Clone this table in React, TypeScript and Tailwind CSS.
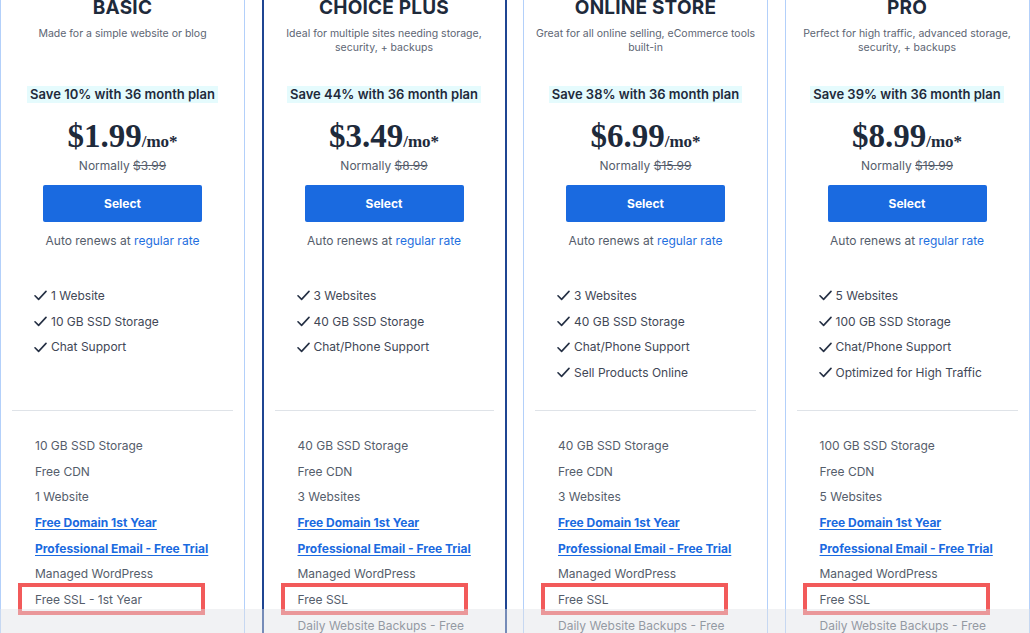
import React from "react";

type Plan = {
  name: string;
  blurb: string[];
  save: string;
  price: string;
  normally: string;
  checks: string[];
  features: { text: string; link?: boolean; boxed?: boolean }[];
  featured?: boolean;
};

const PLANS: Plan[] = [
  {
    name: "BASIC",
    blurb: ["Made for a simple website or blog"],
    save: "Save 10% with 36 month plan",
    price: "$1.99",
    normally: "$3.99",
    checks: ["1 Website", "10 GB SSD Storage", "Chat Support"],
    features: [
      { text: "10 GB SSD Storage" },
      { text: "Free CDN" },
      { text: "1 Website" },
      { text: "Free Domain 1st Year", link: true },
      { text: "Professional Email - Free Trial", link: true },
      { text: "Managed WordPress" },
      { text: "Free SSL - 1st Year", boxed: true },
    ],
  },
  {
    name: "CHOICE PLUS",
    blurb: ["Ideal for multiple sites needing storage,", "security, + backups"],
    save: "Save 44% with 36 month plan",
    price: "$3.49",
    normally: "$8.99",
    checks: ["3 Websites", "40 GB SSD Storage", "Chat/Phone Support"],
    featured: true,
    features: [
      { text: "40 GB SSD Storage" },
      { text: "Free CDN" },
      { text: "3 Websites" },
      { text: "Free Domain 1st Year", link: true },
      { text: "Professional Email - Free Trial", link: true },
      { text: "Managed WordPress" },
      { text: "Free SSL", boxed: true },
      { text: "Daily Website Backups - Free" },
    ],
  },
  {
    name: "ONLINE STORE",
    blurb: ["Great for all online selling, eCommerce tools", "built-in"],
    save: "Save 38% with 36 month plan",
    price: "$6.99",
    normally: "$15.99",
    checks: ["3 Websites", "40 GB SSD Storage", "Chat/Phone Support", "Sell Products Online"],
    features: [
      { text: "40 GB SSD Storage" },
      { text: "Free CDN" },
      { text: "3 Websites" },
      { text: "Free Domain 1st Year", link: true },
      { text: "Professional Email - Free Trial", link: true },
      { text: "Managed WordPress" },
      { text: "Free SSL", boxed: true },
      { text: "Daily Website Backups - Free" },
    ],
  },
  {
    name: "PRO",
    blurb: ["Perfect for high traffic, advanced storage,", "security, + backups"],
    save: "Save 39% with 36 month plan",
    price: "$8.99",
    normally: "$19.99",
    checks: ["5 Websites", "100 GB SSD Storage", "Chat/Phone Support", "Optimized for High Traffic"],
    features: [
      { text: "100 GB SSD Storage" },
      { text: "Free CDN" },
      { text: "5 Websites" },
      { text: "Free Domain 1st Year", link: true },
      { text: "Professional Email - Free Trial", link: true },
      { text: "Managed WordPress" },
      { text: "Free SSL", boxed: true },
      { text: "Daily Website Backups - Free" },
    ],
  },
];

function Check() {
  return (
    <svg width="13" height="11" viewBox="0 0 13 11" className="shrink-0">
      <path d="M1 5.8 L4.6 9.4 L12 1.4" fill="none" stroke="#253044" strokeWidth="1.6" strokeLinecap="round" strokeLinejoin="round" />
    </svg>
  );
}

function PlanCard({ plan }: { plan: Plan }) {
  return (
    <div
      className={
        "w-[245px] shrink-0 bg-white pb-10 " +
        (plan.featured ? "border-x-2 border-[#1f4592]" : "border-x border-[#b3d0fa]")
      }
    >
      <div className="h-[91px] text-center">
        <h2 className="pt-[1px] text-[19px] leading-[23px] font-bold tracking-[0.2px] text-[#1e2a3b]">{plan.name}</h2>
        <p className="mt-[8px] text-[10.5px] leading-[14px] text-[#5d6573]">
          {plan.blurb.map((l) => (
            <span key={l} className="block">
              {l}
            </span>
          ))}
        </p>
      </div>

      <div className="flex justify-center">
        <span className="bg-[#e5fbfd] px-[3px] text-[13px] leading-[17px] font-semibold text-[#1e2a3b]">
          {plan.save}
        </span>
      </div>

      <div className="mt-[13px] flex items-baseline justify-center text-[#1e2a3b]" style={{ fontFamily: '"Liberation Serif", serif' }}>
        <span className="text-[33px] leading-[40px] font-bold">{plan.price}</span>
        <span className="text-[17px] font-bold">/mo*</span>
      </div>

      <p className="mt-[2px] text-center text-[12px] leading-[16px] text-[#555d6b]">
        Normally <span className="line-through">{plan.normally}</span>
      </p>

      <div className="mt-[11px] flex justify-center">
        <button className="h-[37px] w-[159px] rounded-[2px] bg-[#1a6ae0] text-[12px] font-bold text-white">Select</button>
      </div>

      <p className="mt-[11px] text-center text-[12px] leading-[16px] text-[#555d6b]">
        Auto renews at <span className="text-[#1f6fe0]">regular rate</span>
      </p>

      <ul className="mt-[34px] h-[127px] pl-[33px]">
        {plan.checks.map((c) => (
          <li key={c} className="flex h-[25.7px] items-center gap-[4px] text-[12px] text-[#3f4756]">
            <Check />
            <span>{c}</span>
          </li>
        ))}
      </ul>

      <div className="mx-[11px] h-px bg-[#dfe3e8]" />

      <ul className="mt-[22px] pl-[34px]">
        {plan.features.map((f) => (
          <li key={f.text} className="relative flex h-[25.7px] items-center text-[12px]">
            {f.boxed && (
              <span className="pointer-events-none absolute -top-[4px] -bottom-[2px] -left-[17px] w-[187px] border-[4px] border-[#f25a5a]" />
            )}
            {f.link ? (
              <a className="font-bold text-[#1a6ae0] underline underline-offset-2">{f.text}</a>
            ) : (
              <span className="text-[#555d6b]">{f.text}</span>
            )}
          </li>
        ))}
      </ul>
    </div>
  );
}

export default function App() {
  return (
    <div
      className="relative h-[633px] w-[1030px] overflow-hidden bg-white"
      style={{ fontFamily: 'Inter, "Noto Sans", sans-serif' }}
    >
      <div className="-mt-[5px] flex gap-[16.5px]">
        {PLANS.map((p) => (
          <PlanCard key={p.name} plan={p} />
        ))}
      </div>
      <div className="pointer-events-none absolute inset-x-0 bottom-0 h-[24px] bg-[#dfe2e6]/45" />
    </div>
  );
}
